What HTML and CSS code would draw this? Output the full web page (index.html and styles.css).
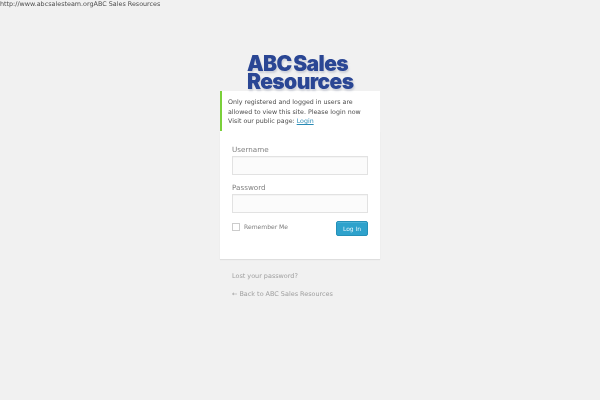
FILE: index.html
```html
<!DOCTYPE html>
<html lang="en">
<head>
<meta charset="utf-8">
<title>ABC Sales Resources</title>
<link rel="stylesheet" href="styles.css">
</head>
<body>
<div class="topline">http://www.abcsalesteam.orgABC Sales Resources</div>
<main class="login">
  <h1 class="logo">ABC Sales<br>Resources</h1>
  <p class="message">Only registered and logged in users are allowed to view this site. Please login now<br>Visit our public page: <a href="#">Login</a></p>
  <form class="card">
    <label class="field-label" for="u">Username</label>
    <input class="field" id="u" type="text">
    <label class="field-label" for="p">Password</label>
    <input class="field" id="p" type="password">
    <div class="actions">
      <label class="remember"><span class="check"></span>Remember Me</label>
      <button class="submit" type="button">Log In</button>
    </div>
  </form>
  <nav class="links">
    <a href="#">Lost your password?</a>
    <a href="#">← Back to ABC Sales Resources</a>
  </nav>
</main>
</body>
</html>
```
FILE: styles.css
```css
* { box-sizing: border-box; }
html, body { margin: 0; padding: 0; height: 100%; }
body {
  background: #f1f1f1;
  color: #444;
  font-family: "DejaVu Sans", sans-serif;
  font-size: 6.4px;
  line-height: 1.4;
  overflow: hidden;
}
.topline { height: 11px; line-height: 8px; font-size: 6.4px; color: #4d4d4d; will-change: opacity; }
.login { width: 160px; margin: 0 auto; padding-top: 44px; will-change: opacity; }
.logo {
  margin: 0;
  height: 36px;
  padding-left: 27px;
  font-family: Inter, "Liberation Sans", sans-serif;
  font-weight: 900;
  font-size: 21px;
  line-height: 18px;
  letter-spacing: -0.6px;
  word-spacing: -2px;
  color: #2a4694;
  white-space: nowrap;
  text-shadow: 1px 2px 2px rgba(120, 130, 160, .3);
}
.message {
  margin: 0;
  height: 40px;
  padding: 6px 4px 0 6px;
  background: #fff;
  border-left: 2px solid #7ad03a;
  font-size: 6.3px;
  line-height: 9.5px;
  color: #4d4d4d;
}
.message a { color: #2a8ab5; text-decoration: underline; }
.card {
  background: #fff;
  height: 128px;
  padding: 13px 12px 0;
  box-shadow: 0 1px 1px rgba(0,0,0,.08);
  display: flex;
  flex-direction: column;
}
.field-label { font-size: 7.2px; line-height: 11px; color: #808080; height: 12px; }
.field {
  display: block;
  flex: none;
  width: 100%;
  height: 19px;
  margin: 0 0 7px;
  padding: 0;
  background: #fbfbfb;
  border: 1px solid #e2e2e2;
  box-shadow: inset 0 1px 1px rgba(0,0,0,.03);
}
.actions { display: flex; justify-content: space-between; align-items: flex-start; margin-top: 1px; }
.remember { display: flex; align-items: center; gap: 4px; font-size: 6.05px; color: #808080; height: 8px; margin-top: 2px; }
.check { width: 8px; height: 8px; border: 1px solid #ccc; background: #fff; }
.submit {
  width: 32px;
  height: 15px;
  padding: 0;
  font: 6px "DejaVu Sans", sans-serif;
  color: #dff2fa;
  background: #2ea2cc;
  border: 1px solid #2590b8;
  border-radius: 2px;
  box-shadow: inset 0 1px 0 rgba(120,200,230,.4);
}
.links { display: flex; flex-direction: column; gap: 7.5px; padding: 12px 12px 0; font-size: 6.45px; line-height: 10px; }
.links a { color: #a0a0a0; text-decoration: none; }
```
